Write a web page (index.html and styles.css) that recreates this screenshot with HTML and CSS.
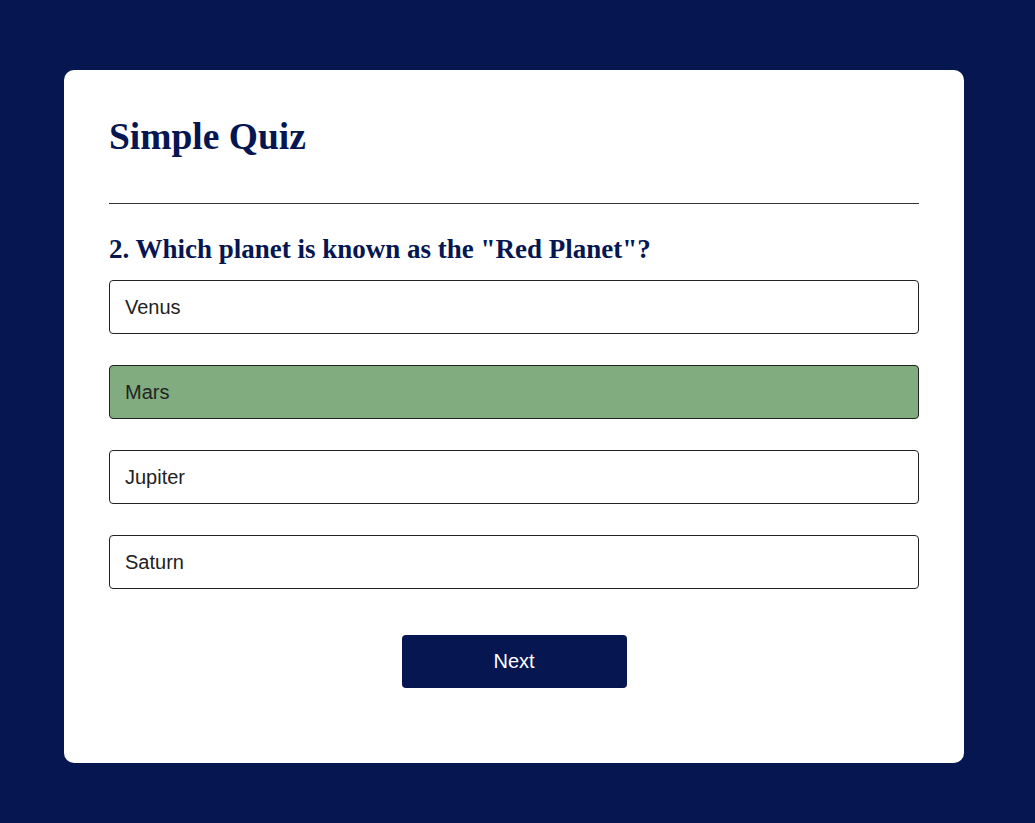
FILE: index.html
```html
<!DOCTYPE html>
<html lang="en">
<head>
<meta charset="utf-8">
<title>Simple Quiz</title>
<link rel="stylesheet" href="styles.css">
</head>
<body>
<div class="app">
  <h1 class="title">Simple Quiz</h1>
  <hr class="divider">
  <div class="quiz">
    <h2 class="question">2. Which planet is known as the "Red Planet"?</h2>
    <div class="answers">
      <button class="option">Venus</button>
      <button class="option correct">Mars</button>
      <button class="option">Jupiter</button>
      <button class="option">Saturn</button>
    </div>
    <button class="next">Next</button>
  </div>
</div>
</body>
</html>
```

FILE: styles.css
```css
* { box-sizing: border-box; }
body {
  margin: 0;
  background: #061651;
  font-family: "Liberation Sans", Arial, sans-serif;
}
.app {
  width: 900px;
  margin: 70px 0 60px 64px;
  background: #fff;
  border-radius: 10px;
  padding: 46px 45px 75px;
}
.title {
  margin: 0;
  font-family: "Liberation Serif", "Times New Roman", serif;
  font-weight: bold;
  font-size: 37.5px;
  line-height: 1.107;
  color: #061651;
}
.divider {
  border: 0;
  border-top: 1px solid #333;
  margin: 45px 0 0;
  height: 0;
}
.question {
  margin: 30px 0 0;
  font-family: "Liberation Serif", "Times New Roman", serif;
  font-weight: bold;
  font-size: 27px;
  line-height: 30px;
  color: #061651;
}
.answers {
  display: flex;
  flex-direction: column;
  gap: 31px;
  margin-top: 16px;
}
.option {
  display: block;
  width: 100%;
  text-align: left;
  background: #fff;
  color: #222;
  border: 1px solid #222;
  border-radius: 4px;
  padding: 14px 15px;
  font-family: "Liberation Sans", Arial, sans-serif;
  font-size: 20px;
  line-height: 24px;
}
.option.correct {
  background: #80ac80;
}
.next {
  display: block;
  width: 225px;
  height: 53px;
  margin: 46px auto 0;
  background: #061651;
  color: #fff;
  border: 0;
  border-radius: 4px;
  font-family: "Liberation Sans", Arial, sans-serif;
  font-size: 20px;
}
```
